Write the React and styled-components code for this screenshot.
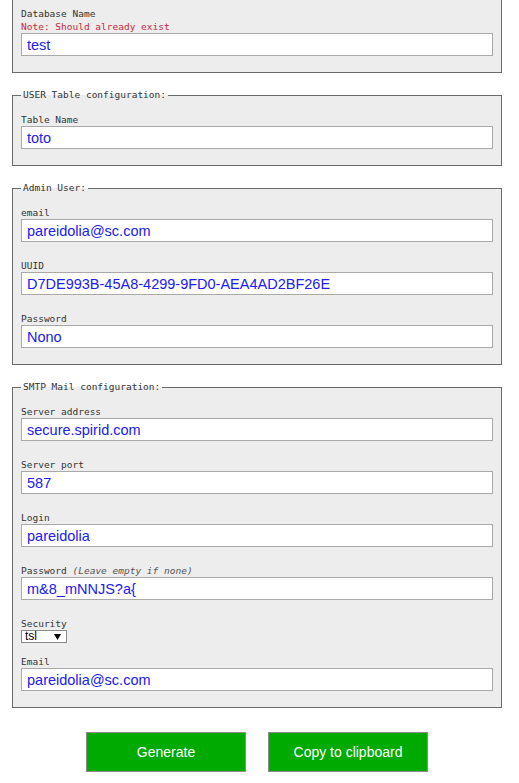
import React from 'react'
import styled, { createGlobalStyle } from 'styled-components'

const GlobalStyle = createGlobalStyle`
  html, body {
    margin: 0;
    padding: 0;
    background: #ffffff;
  }
  body {
    font-family: "DejaVu Sans Mono", monospace;
  }
`

const sections = [
  {
    legend: null,
    fields: [
      {
        label: 'Database Name',
        note: 'Note: Should already exist',
        value: 'test',
      },
    ],
  },
  {
    legend: 'USER Table configuration:',
    fields: [{ label: 'Table Name', value: 'toto' }],
  },
  {
    legend: 'Admin User:',
    fields: [
      { label: 'email', value: 'pareidolia@sc.com' },
      { label: 'UUID', value: 'D7DE993B-45A8-4299-9FD0-AEA4AD2BF26E' },
      { label: 'Password', value: 'Nono' },
    ],
  },
  {
    legend: 'SMTP Mail configuration:',
    fields: [
      { label: 'Server address', value: 'secure.spirid.com' },
      { label: 'Server port', value: '587' },
      { label: 'Login', value: 'pareidolia' },
      {
        label: 'Password',
        hint: '(Leave empty if none)',
        value: 'm&8_mNNJS?a{',
      },
      { label: 'Security', select: ['tsl', 'ssl', 'none'], value: 'tsl' },
      { label: 'Email', value: 'pareidolia@sc.com' },
    ],
  },
]

const App = () => (
  <>
    <GlobalStyle />
    <Page>
      <TopSet>
        <Field field={sections[0].fields[0]} />
      </TopSet>
      {sections.slice(1).map(section => (
        <Set key={section.legend}>
          <Legend>{section.legend}</Legend>
          {section.fields.map(field => (
            <Field key={field.label + field.value} field={field} />
          ))}
        </Set>
      ))}
      <Actions>
        <ActionButton type="button">Generate</ActionButton>
        <ActionButton type="button">Copy to clipboard</ActionButton>
      </Actions>
    </Page>
  </>
)

const Field = ({ field }) => (
  <Group compact={!!field.select}>
    <Label>
      {field.label}
      {field.hint && <Hint> {field.hint}</Hint>}
    </Label>
    {field.note && <Note>{field.note}</Note>}
    {field.select ? (
      <SelectWrap>
        <Select defaultValue={field.value}>
          {field.select.map(option => (
            <option key={option}>{option}</option>
          ))}
        </Select>
        <Arrow width="7" height="6" viewBox="0 0 7 6">
          <path d="M0 0 H7 L3.5 6 Z" fill="#000" />
        </Arrow>
      </SelectWrap>
    ) : (
      <Input type="text" defaultValue={field.value} />
    )}
  </Group>
)

const Page = styled.div`
  width: 490px;
  margin-left: 12px;
  display: flex;
  flex-direction: column;
  gap: 16px;
  padding-bottom: 20px;
`

const Set = styled.fieldset`
  margin: 0;
  padding: 12px 8px 0 8px;
  background: #ededed;
  border: 1px solid #6b6b6b;
  min-width: 0;
`

const TopSet = styled(Set)`
  margin-top: -4px;
  padding-top: 11px;
  border-top: none;
`

const Legend = styled.legend`
  padding: 0 2px;
  font-family: "DejaVu Sans Mono", monospace;
  font-size: 9.5px;
  line-height: 12px;
  color: #333333;
`

const Group = styled.div`
  display: flex;
  flex-direction: column;
  align-items: flex-start;
  margin-bottom: ${({ compact }) => (compact ? '12px' : '17px')};

  &:last-child {
    margin-bottom: 16px;
  }
`

const Label = styled.label`
  font-family: "DejaVu Sans Mono", monospace;
  font-size: 9.5px;
  line-height: 13px;
  color: #333333;
`

const Hint = styled.em`
  font-style: italic;
  color: #555555;
`

const Note = styled.div`
  font-family: "DejaVu Sans Mono", monospace;
  font-size: 9.5px;
  line-height: 13px;
  color: #c8283c;
`

const Input = styled.input`
  box-sizing: border-box;
  width: 100%;
  height: 23px;
  margin: 0;
  padding: 0 5px;
  border: 1px solid #a9a9a9;
  background: #ffffff;
  font-family: "Liberation Sans", Arial, sans-serif;
  font-size: 14.5px;
  color: #2020f0;
  outline: none;
`

const SelectWrap = styled.div`
  position: relative;
  width: 46px;
  height: 13px;
`

const Select = styled.select`
  appearance: none;
  box-sizing: border-box;
  display: block;
  width: 100%;
  height: 100%;
  margin: 0;
  padding: 0 0 0 3px;
  border: 1px solid #8a8a8a;
  border-radius: 0;
  background: #ffffff;
  font-family: "Liberation Sans", Arial, sans-serif;
  font-size: 12px;
  line-height: 11px;
  color: #000000;
`

const Arrow = styled.svg`
  position: absolute;
  right: 6px;
  top: 4px;
  pointer-events: none;
`

const Actions = styled.div`
  display: flex;
  justify-content: center;
  gap: 22px;
  margin-top: 8px;
`

const ActionButton = styled.button`
  width: 160px;
  height: 40px;
  background: #00aa00;
  border: 1px solid #8c8c8c;
  color: #ffffff;
  font-family: "Liberation Sans", Arial, sans-serif;
  font-size: 14px;
  cursor: pointer;
`

export default App
